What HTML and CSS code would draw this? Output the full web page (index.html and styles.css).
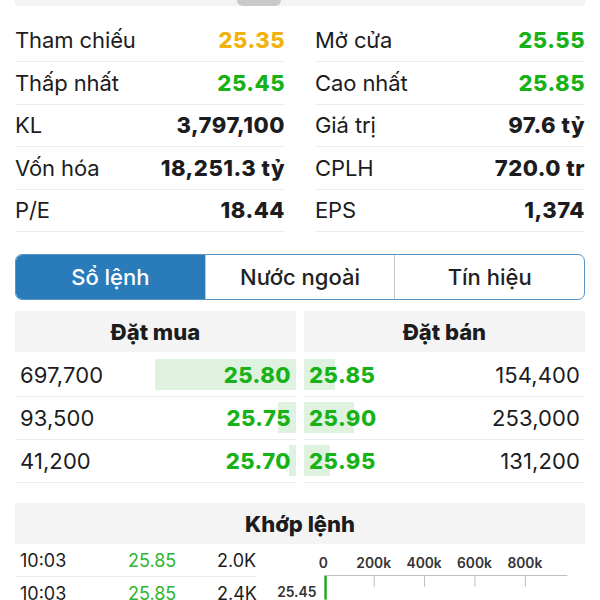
FILE: index.html
```html
<!DOCTYPE html>
<html lang="vi">
<head>
<meta charset="utf-8">
<title>Chi tiết cổ phiếu</title>
<link rel="stylesheet" href="styles.css">
</head>
<body>
<div class="page">
  <div class="topstrip"><div class="handle"></div></div>

  <div class="stats">
    <div class="col">
      <div class="stat"><span class="lbl">Tham chiếu</span><span class="val ref">25.35</span></div>
      <div class="stat"><span class="lbl">Thấp nhất</span><span class="val up">25.45</span></div>
      <div class="stat"><span class="lbl">KL</span><span class="val">3,797,100</span></div>
      <div class="stat"><span class="lbl">Vốn hóa</span><span class="val">18,251.3 tỷ</span></div>
      <div class="stat"><span class="lbl">P/E</span><span class="val">18.44</span></div>
    </div>
    <div class="col">
      <div class="stat"><span class="lbl">Mở cửa</span><span class="val up">25.55</span></div>
      <div class="stat"><span class="lbl">Cao nhất</span><span class="val up">25.85</span></div>
      <div class="stat"><span class="lbl">Giá trị</span><span class="val">97.6 tỷ</span></div>
      <div class="stat"><span class="lbl">CPLH</span><span class="val">720.0 tr</span></div>
      <div class="stat"><span class="lbl">EPS</span><span class="val">1,374</span></div>
    </div>
  </div>

  <div class="tabs">
    <div class="tab active">Sổ lệnh</div>
    <div class="tab">Nước ngoài</div>
    <div class="tab">Tín hiệu</div>
  </div>

  <div class="book">
    <div class="side buy">
      <div class="bhead">Đặt mua</div>
      <div class="brow"><div class="bar" style="width:141px"></div><span class="qty">697,700</span><span class="price">25.80</span></div>
      <div class="brow"><div class="bar" style="width:18px"></div><span class="qty">93,500</span><span class="price">25.75</span></div>
      <div class="brow"><div class="bar" style="width:7px"></div><span class="qty">41,200</span><span class="price">25.70</span></div>
    </div>
    <div class="side sell">
      <div class="bhead">Đặt bán</div>
      <div class="brow"><div class="bar" style="width:31px"></div><span class="price">25.85</span><span class="qty">154,400</span></div>
      <div class="brow"><div class="bar" style="width:50px"></div><span class="price">25.90</span><span class="qty">253,000</span></div>
      <div class="brow"><div class="bar" style="width:26px"></div><span class="price">25.95</span><span class="qty">131,200</span></div>
    </div>
  </div>

  <div class="match">
    <div class="mhead">Khớp lệnh</div>
    <div class="mbody">
      <div class="trades">
        <div class="trow"><span class="t">10:03</span><span class="p">25.85</span><span class="v">2.0K</span></div>
        <div class="trow"><span class="t">10:03</span><span class="p">25.85</span><span class="v">2.4K</span></div>
      </div>
      <svg class="chart" width="320" height="56" viewBox="0 0 320 56">
        <text class="ax" x="55" y="24" text-anchor="middle">0</text>
        <text class="ax" x="106" y="24" text-anchor="middle">200k</text>
        <text class="ax" x="157" y="24" text-anchor="middle">400k</text>
        <text class="ax" x="208" y="24" text-anchor="middle">600k</text>
        <text class="ax" x="259" y="24" text-anchor="middle">800k</text>
        <line x1="56" y1="31.5" x2="302" y2="31.5" stroke="#bdbdbd" stroke-width="1"/>
        <line x1="106.5" y1="31" x2="106.5" y2="43" stroke="#bdbdbd" stroke-width="1"/>
        <line x1="157.5" y1="31" x2="157.5" y2="43" stroke="#bdbdbd" stroke-width="1"/>
        <line x1="208.5" y1="31" x2="208.5" y2="43" stroke="#bdbdbd" stroke-width="1"/>
        <line x1="259.5" y1="31" x2="259.5" y2="43" stroke="#bdbdbd" stroke-width="1"/>
        <rect x="56" y="32" width="2.5" height="24" fill="#1faa1f"/>
        <text class="ax" x="48" y="53" text-anchor="end">25.45</text>
      </svg>
    </div>
  </div>
</div>
</body>
</html>
```

FILE: styles.css
```css
* { box-sizing: border-box; }
html, body { margin: 0; padding: 0; background: #fff; }
body {
  font-family: Inter, "Noto Sans", "Liberation Sans", sans-serif;
  color: #1c1c1e;
  width: 600px;
  height: 600px;
  overflow: hidden;
}
.page { padding: 0 15px; }

.topstrip {
  position: relative;
  height: 6px;
  background: #f3f3f3;
  border-radius: 0 0 3px 3px;
}
.handle {
  position: absolute;
  left: 222px;
  top: 0;
  width: 44px;
  height: 6px;
  background: #c9c9c9;
  border-radius: 0 0 6px 6px;
}

.stats {
  display: grid;
  grid-template-columns: 270px 270px;
  column-gap: 30px;
  margin-top: 13.5px;
}
.stat {
  display: flex;
  justify-content: space-between;
  align-items: center;
  height: 42.5px;
  border-bottom: 1px solid #ececec;
  font-size: 22px;
}
.lbl { font-weight: 400; letter-spacing: -0.1px; }
.val { font-weight: 800; letter-spacing: 0.5px; }
.ref { color: #f1b20c; }
.up { color: #17b217; }

.tabs {
  display: flex;
  margin-top: 22px;
  height: 46px;
  border: 1.5px solid #5a93c6;
  border-radius: 7px;
  overflow: hidden;
}
.tab {
  flex: 1;
  display: flex;
  align-items: center;
  justify-content: center;
  font-size: 22px;
  font-weight: 500;
  color: #222;
  border-left: 1px solid #c3c8cc;
}
.tab:first-child { border-left: none; }
.tab.active { background: #2a7bba; color: #fff; }

.book {
  display: flex;
  gap: 8px;
  margin-top: 11px;
}
.side { flex: 1; }
.bhead {
  height: 41px;
  background: #f4f4f4;
  display: flex;
  align-items: center;
  justify-content: center;
  font-size: 22px;
  font-weight: 800;
  margin-bottom: 2px;
}
.brow {
  position: relative;
  height: 43px;
  border-bottom: 1px solid #ececec;
  display: flex;
  align-items: center;
  justify-content: space-between;
  padding: 0 5px;
  font-size: 22px;
}
.bar {
  position: absolute;
  top: 5px;
  bottom: 6px;
  background: #dff2df;
}
.buy .bar { right: 0; }
.sell .bar { left: 0; }
.qty { position: relative; font-weight: 400; letter-spacing: 0.1px; }
.price { position: relative; font-weight: 800; color: #17b217; letter-spacing: 0.5px; }

.match { margin-top: 20px; }
.mhead {
  height: 41px;
  background: #f4f4f4;
  display: flex;
  align-items: center;
  justify-content: center;
  font-size: 22px;
  font-weight: 800;
}
.mbody { display: flex; }
.trades { width: 243px; }
.trow {
  display: flex;
  align-items: center;
  height: 32.5px;
  padding-top: 2px;
  border-bottom: 1px solid #ececec;
  font-size: 18px;
  padding-left: 5px;
}
.t { width: 108px; }
.p { width: 89px; color: #2db52d; }
.chart { display: block; margin-left: 12px; }
.ax {
  font-family: Inter, "Noto Sans", sans-serif;
  font-size: 14px;
  font-weight: 600;
  fill: #333;
}
```
